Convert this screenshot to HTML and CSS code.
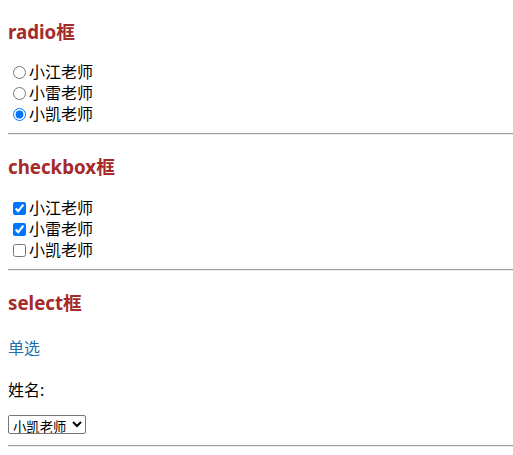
FILE: index.html
```html
<!DOCTYPE html>
<html lang="zh">
<head>
<meta charset="utf-8">
<title>表单</title>
<link rel="stylesheet" href="styles.css">
</head>
<body>
<h3 class="title">radio框</h3>
<div class="group">
<label class="row"><input type="radio" name="t">小江老师</label>
<label class="row"><input type="radio" name="t">小雷老师</label>
<label class="row"><input type="radio" name="t" checked>小凯老师</label>
</div>
<hr class="rule">
<h3 class="title">checkbox框</h3>
<div class="group">
<label class="row"><input type="checkbox" checked>小江老师</label>
<label class="row"><input type="checkbox" checked>小雷老师</label>
<label class="row"><input type="checkbox">小凯老师</label>
</div>
<hr class="rule">
<h3 class="title">select框</h3>
<h4 class="sub">单选</h4>
<p class="para">姓名:</p>
<select class="pick">
<option>小江老师</option>
<option>小雷老师</option>
<option selected>小凯老师</option>
</select>
<hr class="rule">
</body>
</html>
```
FILE: styles.css
```css
body {
  margin: 0 0 8px 8px;
  font-family: "Noto Sans", "Noto Sans CJK SC", sans-serif;
  font-size: 16px;
  line-height: 21px;
  color: #000;
}
.title {
  font-size: 18.72px;
  line-height: 25px;
  font-weight: bold;
  color: #a52a2a;
  margin: 18.72px 0;
}
.group {
  display: flex;
  flex-direction: column;
}
.row {
  display: block;
  height: 21px;
}
.row input {
  margin: 3px 3px 0 5px;
  vertical-align: -1px;
}
.rule {
  margin: 8px 0;
  border: none;
  border-top: 1px solid #9a9a9a;
  border-bottom: 1px solid #eeeeee;
  height: 0;
}
.sub {
  font-size: 16px;
  font-weight: normal;
  color: #1d6fb0;
  margin: 23.28px 0 21.28px;
}
.para {
  margin: 16px 0 14px;
}
.pick {
  font-family: "Noto Sans CJK SC", sans-serif;
  font-size: 13.33px;
  line-height: 16px;
  height: 19px;
  width: 78px;
  padding: 0;
  border: 1px solid #767676;
  border-radius: 2px;
  background: #fff;
  color: #000;
}
```
